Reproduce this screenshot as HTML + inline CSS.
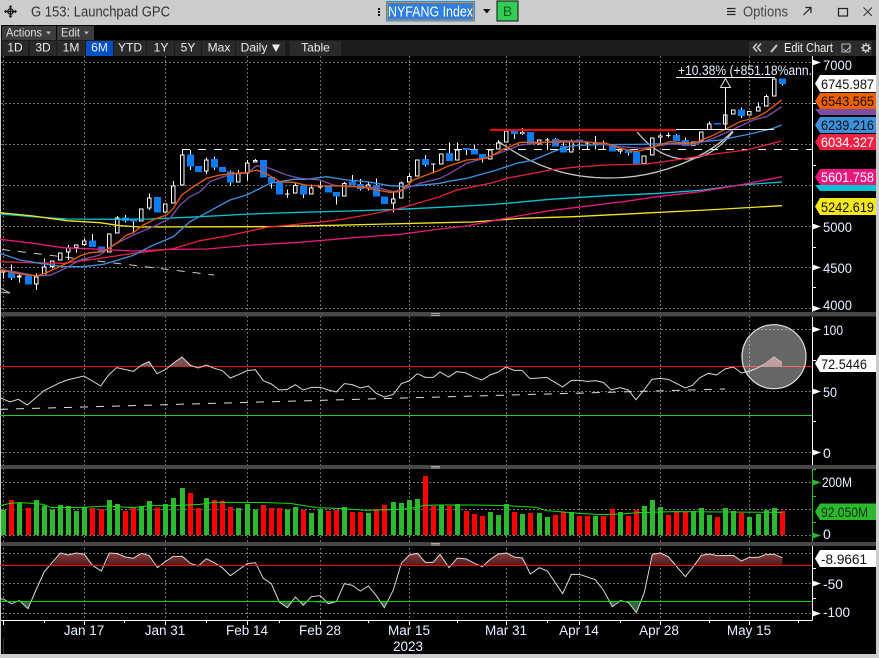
<!DOCTYPE html>
<html><head><meta charset="utf-8"><title>G 153: Launchpad GPC</title>
<style>
html,body{margin:0;padding:0;background:#ccc;width:879px;height:658px;overflow:hidden}
svg{display:block}
text{font-family:"Liberation Sans",sans-serif}
.w{stroke:#fff;stroke-width:3;fill:none;shape-rendering:crispEdges}
.o{stroke:#fff;stroke-width:14;fill:none;shape-rendering:crispEdges}
.i{stroke:#000;stroke-width:8;fill:none;shape-rendering:crispEdges}
.b{stroke:#0a7cf2;stroke-width:21;fill:none;shape-rendering:crispEdges}
.ma{fill:none;stroke-width:4;stroke-linejoin:round}
.ax{fill:#e6f0ff;font-size:14px}
.tag{font-size:14px}
.btn{fill:#ececec;font-size:12px;text-anchor:middle}
</style></head><body>
<svg width="879" height="658" viewBox="0 0 879 658" xmlns="http://www.w3.org/2000/svg">
<defs>
<clipPath id="cA"><rect x="0" y="0" width="2640" height="300"/></clipPath>
<clipPath id="cB"><rect x="0" y="409" width="2640" height="100"/></clipPath>
<clipPath id="cC"><rect x="0" y="0" width="2640" height="170"/></clipPath>
<linearGradient id="gr" x1="0" y1="0" x2="0" y2="1"><stop offset="0" stop-color="#8a3a3a"/><stop offset="1" stop-color="#401818"/></linearGradient>
</defs>
<rect width="879" height="658" fill="#cccccc"/>
<rect x="1" y="25" width="875" height="629" fill="#000"/>

<!-- title bar -->
<g stroke="#111" fill="none"><path d="M5.5 11.5H15.5M10.5 6.5V16.5" stroke-width="1.2"/><circle cx="10.5" cy="11.5" r="2.7" stroke-width="1.2"/></g>
<path d="M10.5 5l-2 2.2h4zM10.5 18l-2-2.2h4zM4 11.5l2.2-2v4zM17 11.5l-2.2-2v4z" fill="#111"/>
<text x="31" y="16.5" font-size="15" fill="#333" textLength="139" lengthAdjust="spacingAndGlyphs">G 153: Launchpad GPC</text>
<path d="M378 8h2v2h-2zM378 11h2v2h-2zM378 14h2v2h-2z" fill="#111"/>
<rect x="386" y="1" width="89" height="20.500" fill="#1e8fe8"/>
<rect x="387.500" y="2.500" width="86" height="17.500" fill="#2d7fe0" stroke="#e88a1c" stroke-width="1"/>
<text x="388" y="16.500" font-size="15" fill="#fff" textLength="85" lengthAdjust="spacingAndGlyphs">NYFANG Index</text>
<path d="M483 9h7.500l-3.700 4.500z" fill="#111"/>
<rect x="497" y="1" width="21" height="20" fill="#33cc55" stroke="#111" stroke-width="1"/>
<text x="507.500" y="16" font-size="14" fill="#0d5a1c" text-anchor="middle">B</text>
<path d="M727 8.500h8.500M727 11.500h8.500M727 14.500h8.500" stroke="#222" stroke-width="1.200"/>
<text x="743" y="16.500" font-size="15" fill="#444" textLength="45" lengthAdjust="spacingAndGlyphs">Options</text>
<path d="M803.500 15l7-7M805.500 7.500h5.500v5.500" stroke="#222" stroke-width="1.200" fill="none"/>
<rect x="838.500" y="8.500" width="9" height="7.500" fill="none" stroke="#222" stroke-width="1.200"/>
<path d="M863.500 7.500l8.500 8.500M872 7.500l-8.500 8.500" stroke="#333" stroke-width="1"/>

<!-- toolbar -->
<rect x="1" y="40" width="875" height="16" fill="#1c1c1c"/>
<rect x="2" y="26" width="54" height="14" fill="#3c3c3c"/><rect x="57" y="26" width="37" height="14" fill="#3c3c3c"/>
<text x="6" y="36.500" font-size="12" fill="#e0e0e0" textLength="36" lengthAdjust="spacingAndGlyphs">Actions</text>
<path d="M46 31.500h5l-2.500 3z" fill="#bbb"/>
<text x="61" y="36.500" font-size="12" fill="#e0e0e0" textLength="19" lengthAdjust="spacingAndGlyphs">Edit</text>
<path d="M84 31.500h5l-2.500 3z" fill="#bbb"/>
<g fill="#2a2a2a"><rect x="3" y="41" width="25" height="15"/><rect x="30" y="41" width="26" height="15"/><rect x="57" y="41" width="28" height="15"/><rect x="114" y="41" width="32" height="15"/><rect x="147" y="41" width="27" height="15"/><rect x="175" y="41" width="26" height="15"/><rect x="202" y="41" width="33" height="15"/><rect x="236" y="41" width="49" height="15"/><rect x="290" y="41" width="51" height="15"/></g>
<rect x="86" y="41" width="27" height="15" fill="#0050c4"/>
<text class="btn" x="15" y="51.500">1D</text><text class="btn" x="43" y="51.500">3D</text><text class="btn" x="71" y="51.500">1M</text><text class="btn" x="99.500" y="51.500">6M</text><text class="btn" x="130" y="51.500">YTD</text><text class="btn" x="161" y="51.500">1Y</text><text class="btn" x="188" y="51.500">5Y</text><text class="btn" x="219" y="51.500">Max</text><text class="btn" x="254" y="51.500">Daily</text>
<path d="M272 44.500h8l-4 7.500z" fill="#eee"/>
<text class="btn" x="315.500" y="51.500">Table</text>
<rect x="749" y="41" width="123" height="15" fill="#2c2c2c"/>
<path d="M757 43.500l-3.500 4 3.500 4M761 43.500l-3.500 4 3.500 4" stroke="#ccc" stroke-width="1.500" fill="none"/>
<path d="M771 52l6-7" stroke="#ccc" stroke-width="2"/>
<text x="784" y="52" font-size="13" fill="#f0f0f0" textLength="49" lengthAdjust="spacingAndGlyphs">Edit Chart</text>
<path d="M842 44h8v8h-8zM843 49l3 2 5-5" stroke="#bbb" fill="none"/>
<circle cx="866" cy="48" r="2.800" fill="none" stroke="#ccc" stroke-width="1.500"/><circle cx="866" cy="48" r="4" fill="none" stroke="#ccc" stroke-width="1.800" stroke-dasharray="1.500 1.500"/>

<!-- grid -->
<g stroke="#707070" stroke-width="1" stroke-dasharray="2 2" fill="none">
<path d="M3.500 56V620M84.500 56V620M165.500 56V620M247.500 56V620M320.500 56V620M409.500 56V620M506.500 56V620M579.500 56V620M660.500 56V620M749.500 56V620"/>
<path d="M1 62.500H812M1 103.500H812M1 144.500H812M1 185.500H812M1 226.500H812M1 267.500H812M1 308.500H812M1 329.500H812M1 391.500H812M1 452.500H812M1 482.500H812M1 509.500H812M1 535.500H812M1 553.500H812M1 583.500H812M1 613.500H812"/>
</g>

<!-- cup arcs and dashes -->
<path d="M498 141C535 168 570 178 610 178C655 178 705 160 733 131" fill="none" stroke="#c8c8c8" stroke-width="1.300"/>
<path d="M637 132C652 150 668 159 686 159C704 159 720 148 733 132" fill="none" stroke="#c8c8c8" stroke-width="1.300"/>
<path d="M182 149.500H812" stroke="#fff" stroke-width="1" stroke-dasharray="8 8"/>
<path d="M2 249.500L214 275" stroke="#ccc" stroke-width="1" stroke-dasharray="8 8"/>
<path d="M0 288l10 5M0 292l10 1" stroke="#bbb" stroke-width="1"/>

<!-- candles group 1 -->
<g transform="translate(0,150) scale(.33333)">
<path class="w" d="M10 365V386M34 343V390M58 370V398M109 370V420M133 325V378M157 331V355M205 285V330M229 284V308M253 265V288M277 252V291M352 198V250M376 195V218M400 208V250M448 130V180M520 93V161M547 0V13M571 0V60M619 22V72M643 20V60M691 62V107M715 60V98M742 30V92M766 27V37M814 81V116M862 118V144M886 100V130M910 107V144M934 103V134M961 95V115M1009 126V164M1033 96V139M1057 75V94M1081 87V122M1105 98V122M1129 85V140M1180 128V188M1204 95V146M1228 70V97M547 -1H560"/>
<path class="b" d="M34 367V384M85 377V404M277 271V291M304 289V307M376 202V213M400 208V215M472 141V188M571 13V50M595 48V66M643 27V52M667 51V66M691 64V98M790 30V83M814 81V98M838 97V134M910 107V134M985 110V128M1009 126V140M1057 94V105M1081 102V117M1129 105V140M1153 139V162M1276 28V44"/>
<path class="o" d="M10 365V368M58 376V383M109 380V404M133 349V378M157 331V351M181 307V332M205 293V308M229 284V294M253 272V285M328 250V307M352 202V250M424 176V214M448 142V176M496 160V187M520 106V161M547 13V107M619 28V65M715 70V98M742 37V70M766 30V37M862 130V133M886 105V130M934 112V134M961 110V113M1033 99V139M1105 103V112M1180 146V160M1204 98V146M1228 78V97M1252 29V79"/>
<path class="i" d="M58 379V380M109 383V401M133 352V375M157 334V348M181 310V329M205 296V305M229 287V291M253 275V282M328 253V304M352 205V247M424 179V211M448 145V173M496 163V184M520 109V158M547 16V104M619 31V62M715 73V95M742 40V67M766 33V34M886 108V127M934 115V131M1033 102V136M1105 106V109M1180 149V157M1204 101V143M1228 81V94M1252 32V76"/>
</g>
<!-- candles group 2 -->
<g transform="translate(420,110) scale(.33333)">
<path class="w" d="M16 135V170M40 161V190M88 97V153M112 97V118M139 114V135M163 105V118M187 132V158M235 90V97M283 63V87M307 54V75M382 84V120M406 84V87M430 93V108M454 88V92M478 88V118M502 96V118M526 78V118M550 92V118M601 115V132M625 118V137"/>
<path class="b" d="M16 147V165M88 129V153M139 114V120M163 118V134M187 132V146M283 63V72M331 66V103M406 87V110M430 108V128M478 88V96M550 97V103M577 103V125M625 118V129M649 126V162"/>
<path class="o" d="M40 161V164M64 130V163M112 118V152M211 118V149M235 97V119M259 62V98M307 66V72M358 88V103M382 88V91M454 92V128M502 98V100M526 100V102M601 118V124"/>
<path class="i" d="M64 133V160M112 121V149M211 121V146M235 100V116M259 65V95M307 68V70M358 91V100M454 95V125M601 120V122"/>
</g>
<!-- candles group 3 -->
<g transform="translate(620,60) scale(.33333)">
<path class="w" d="M121 222V255M145 218V232M169 222V225M196 232V240M268 185V190M364 143V174M415 127V139M439 103V108M487 72V76"/>
<path class="b" d="M169 225V243M196 240V258M292 189V193M364 148V168M487 55V72"/>
<path class="o" d="M72 286V312M97 232V286M121 226V232M145 225V228M220 245V258M244 214V244M268 190V210M316 163V193M340 148V163M388 153V166M415 139V155M439 108V140M463 55V109"/>
<path class="i" d="M72 289V309M97 235V283M121 228V230M220 248V255M244 217V241M268 193V207M316 166V190M340 151V160M388 156V163M415 142V152M439 111V137M463 58V106"/>
</g>

<!-- moving averages -->
<g transform="translate(0,150) scale(.33333)">
<polyline class="ma" stroke="#00c4d4" points="0,192 100,200 200,207 350,208 450,207 600,200 750,192 900,187 1050,183 1200,178 1320,172 1450,165 1520,160 1650,148 1820,137 1980,130 2110,120 2220,105 2346,96"/>
<polyline class="ma" stroke="#f2e41e" points="0,188 100,198 200,212 300,218 360,227 420,231 800,230 1000,226 1200,221 1320,218 1420,216 1560,205 1720,200 1920,190 2120,180 2346,167"/>
<polyline class="ma" stroke="#e8177e" points="0,268 100,280 190,293 300,298 400,303 520,298 620,297 760,285 900,277 1060,263 1200,253 1320,237 1400,228 1490,210 1570,195 1650,182 1770,167 1870,155 1970,140 2100,125 2220,105 2346,80"/>
<polyline class="ma" stroke="#e3203e" points="0,335 100,338 190,340 300,325 400,310 520,296 600,272 680,258 800,232 900,222 1000,212 1100,195 1200,175 1320,140 1370,120 1470,100 1520,85 1650,60 1720,52 1820,45 1940,42 2040,28 2120,15 2240,0 2345,-27"/>
<polyline class="ma" stroke="#3c90dc" points="0,310 60,330 120,340 190,350 250,350 310,343 400,316 450,290 520,260 570,215 620,188 690,150 740,135 810,100 880,88 920,88 980,80 1040,90 1100,95 1170,107 1220,110 1320,100 1340,95 1400,85 1490,60 1550,40 1600,30 1660,5 1710,-12 1790,-16 1920,-17 2060,-20 2160,-30 2250,-48 2320,-65 2345,-75"/>
<polyline class="ma" stroke="#7c4fa4" points="0,358 60,368 110,378 150,376 190,358 240,330 300,315 340,285 400,255 460,230 510,205 540,165 570,140 600,125 630,95 670,80 700,72 740,70 770,47 810,55 860,75 900,85 960,90 1000,105 1040,110 1090,110 1140,115 1180,125 1210,118 1260,100 1320,85 1350,70 1400,40 1450,25 1510,5 1560,-15 1610,-20 1680,-28 1740,-27 1790,-20 1860,-10 1930,-5 2010,-18 2080,-15 2140,-35 2200,-62 2260,-90 2300,-100 2345,-130"/>
<polyline class="ma" stroke="#e85c00" points="0,360 60,372 110,378 140,368 200,340 240,318 270,308 310,305 350,280 380,255 400,248 430,225 470,205 500,195 520,175 545,135 580,110 620,85 660,75 700,70 740,68 770,60 800,72 840,95 880,97 920,106 960,108 1000,108 1040,108 1090,112 1130,120 1170,127 1200,125 1240,90 1280,75 1320,60 1340,50 1400,30 1460,25 1510,-2 1560,-23 1610,-23 1710,-24 1760,-24 1820,-20 1860,-5 1910,5 1957,-8 2010,-25 2080,-20 2130,-40 2176,-62 2220,-85 2270,-98 2300,-115 2345,-150"/>
</g>

<!-- annotations -->
<path d="M490 130H676" stroke="#ff0000" stroke-width="2"/>
<path d="M676 129.500H774M676 77.500H775M725.500 129V88" stroke="#fff" stroke-width="1"/>
<path d="M725.500 78.500L720.500 87.500H730.500Z" fill="#000" stroke="#ddd" stroke-width="1"/>
<text x="678" y="75" font-size="13.500" fill="#e8f0ff" textLength="134" lengthAdjust="spacingAndGlyphs">+10.38% (+851.18%ann.</text>

<!-- RSI -->
<path d="M0 366.500H812" stroke="#ff0000" stroke-width="1"/>
<path d="M0 415.500H812" stroke="#22cc22" stroke-width="1"/>
<g transform="translate(0,310) scale(.33333)">
<polygon clip-path="url(#cC)" fill="#7d4f4f" points="415,170 447,155 458,170 510,170 546,141 580,170"/>
<path d="M0 298L1320 261L2175 237" stroke="#ddd" stroke-width="3" fill="none" stroke-dasharray="24 24"/>
<polyline fill="none" stroke="#d8d8d8" stroke-width="3" points="0,263 30,276 55,268 82,285 132,242 180,218 205,209 252,198 302,228 326,195 350,173 400,184 425,165 447,155 471,191 497,178 520,160 546,141 571,166 595,174 619,165 643,175 667,182 691,204 715,194 742,182 766,179 790,212 814,222 838,240 862,238 886,224 910,240 934,232 961,232 985,240 1009,246 1033,221 1057,224 1081,234 1105,228 1129,250 1153,261 1180,253 1204,221 1228,212 1252,191 1276,202 1300,202 1320,186 1346,201 1370,185 1395,188 1420,200 1446,210 1470,195 1495,186 1518,171 1542,181 1566,181 1590,206 1640,202 1688,231 1714,211 1738,211 1762,214 1786,212 1810,217 1834,240 1860,233 1885,240 1908,269 1932,240 1956,208 1980,205 2005,208 2056,234 2077,226 2100,203 2125,190 2150,195 2175,177 2200,171 2225,189 2250,183 2270,175 2295,162 2322,141 2346,158"/>
</g>
<circle cx="774" cy="356.700" r="32" fill="#ffffff" fill-opacity=".4" stroke="#e0e0e0" stroke-width="1.200"/>
<polygon points="760,367 765,364 774,357 782,362.700 782,367" fill="#c09c9e"/>

<!-- volume -->
<g transform="translate(0,465) scale(.33333)">
<g stroke-width="15" fill="none" shape-rendering="crispEdges">
<path stroke="#2eb82e" d="M10 135V210M58 113V210M109 105V210M133 122V210M157 134V210M181 120V210M205 123V210M229 138V210M253 126V210M328 105V210M352 117V210M424 123V210M448 108V210M496 117V210M520 99V210M547 69V210M619 99V210M715 129V210M742 117V210M766 134V210M862 134V210M886 126V210M934 144V210M961 132V210M1033 126V210M1105 144V210M1180 111V210M1204 114V210M1228 105V210M1252 102V210M1324 120V210M1372 117V210M1471 141V210M1495 150V210M1519 117V210M1567 147V210M1618 144V210M1642 156V210M1714 141V210M1786 153V210M1861 141V210M1933 123V210M1957 105V210M1981 126V210M2080 138V210M2104 129V210M2128 150V210M2176 129V210M2200 138V210M2248 156V210M2275 147V210M2299 135V210M2323 129V210"/>
<path stroke="#ff0000" d="M34 105V210M85 129V210M277 129V210M304 132V210M376 138V210M400 128V210M472 128V210M571 84V210M595 129V210M643 105V210M667 108V210M691 126V210M790 120V210M814 129V210M838 129V210M910 135V210M985 138V210M1009 135V210M1057 141V210M1081 141V210M1129 132V210M1153 120V210M1276 33V210M1300 123V210M1348 123V210M1399 138V210M1423 147V210M1447 153V210M1543 141V210M1591 144V210M1666 150V210M1690 143V210M1738 153V210M1762 153V210M1810 153V210M1837 132V210M1885 153V210M1909 135V210M2005 150V210M2029 138V210M2056 141V210M2152 156V210M2224 144V210M2347 138V210"/>
</g>
<polyline fill="none" stroke="#11dd11" stroke-width="3" points="0,122 30,115 60,113 100,115 130,118 155,128 250,127 320,123 400,128 450,122 520,122 600,118 640,112 700,112 800,113 870,115 950,128 1030,131 1100,136 1200,133 1250,128 1270,121 1320,120 1420,120 1520,122 1610,127 1640,137 1740,145 1800,149 1860,147 1920,143 2020,140 2347,142"/>
</g>

<!-- %R -->
<g transform="translate(0,465) scale(.33333)">
<polygon clip-path="url(#cA)" fill="url(#gr)" points="157,300 181,264 205,270 229,264 253,268 277,300 318,300 328,264 352,266 376,276 400,280 424,265 448,272 462,300 490,300 520,274 547,274 571,295 595,303 619,281 643,293 655,300 1204,300 1228,270 1252,265 1276,292 1300,292 1320,268 1347,308 1372,279 1399,282 1423,295 1447,305 1471,283 1495,267 1519,264 1543,276 1567,279 1585,300 1950,300 1957,268 1981,264 2005,275 2030,300 2080,300 2104,271 2128,267 2152,272 2200,271 2224,288 2248,277 2275,277 2299,268 2323,268 2347,278 2347,300"/>
<polygon clip-path="url(#cB)" fill="#2c6a3c" points="60,409 84,431 92,409 835,409 862,428 880,409 895,409 910,421 920,409 985,416 1009,409 1140,409 1153,428 1162,409 1825,409 1837,425 1850,409 1885,412 1909,443 1925,409"/>
<polyline fill="none" stroke="#d8d8d8" stroke-width="3" points="0,402 10,402 34,416 58,407 84,431 108,375 133,320 157,292 181,264 205,270 229,264 253,268 277,301 304,318 328,264 352,266 376,276 400,280 424,265 448,272 472,308 496,290 520,274 547,274 571,295 595,303 619,281 643,293 667,308 691,332 715,315 742,296 766,293 790,340 814,356 838,411 862,428 886,396 910,421 934,395 961,392 985,416 1009,410 1033,356 1057,361 1081,378 1105,363 1129,392 1153,428 1180,375 1204,295 1228,270 1252,265 1276,292 1300,292 1320,268 1347,308 1372,279 1399,282 1423,295 1447,305 1471,283 1495,267 1519,264 1543,276 1567,279 1591,327 1618,308 1642,318 1688,386 1714,328 1738,328 1786,344 1810,375 1837,425 1861,407 1885,412 1909,443 1933,383 1957,268 1981,264 2005,275 2056,335 2080,305 2104,271 2128,267 2152,272 2200,271 2224,288 2248,277 2275,277 2299,268 2323,268 2347,278"/>
</g>
<path d="M0 565.500H812" stroke="#ff0000" stroke-width="1"/>
<path d="M0 601.500H812" stroke="#00dd00" stroke-width="1"/>

<!-- separators -->
<g fill="#474747"><rect x="1" y="312" width="875" height="4.500"/><rect x="1" y="465" width="875" height="4"/><rect x="1" y="542" width="875" height="4"/></g>
<path d="M431 313.500h9M431 315.500h9M431 466.500h9M431 468h9M431 543.500h9M431 545h9" stroke="#aaa" stroke-width="1"/>

<!-- axes -->
<path d="M812.500 56V312M812.500 317V465M812.500 546V620.500M1 620.500H812.500" stroke="#fff" stroke-width="1"/>
<path d="M812.500 469V542" stroke="#2eb82e" stroke-width="1"/>
<path d="M812 165.500h4M812 247.500h4M812 287.500h4M812 103.500h4M812 360.500h4M812 421.500h4M812 568.500h4M812 598.500h4" stroke="#fff"/>
<path d="M812 469.500h4M812 496.500h4M812 522.500h4" stroke="#2eb82e"/>
<path d="M3.500 620V625M44.500 620V623M84.500 620V625M124.500 620V623M165.500 620V625M206.500 620V623M247.500 620V625M279.500 620V623M320.500 620V625M368.500 620V623M409.500 620V625M457.500 620V623M506.500 620V625M547.500 620V623M579.500 620V625M620.500 620V623M660.500 620V625M709.500 620V623M749.500 620V625M798.500 620V623" stroke="#fff"/>
<path d="M3.500 638V654" stroke="#333"/>
<g fill="#fff"><path d="M812.500 59.500L821 62.500L812.500 65.500ZM812.500 223.500L821 226.500L812.500 229.500ZM812.500 264.500L821 267.500L812.500 270.500ZM812.500 305.500L821 308.500L812.500 311.500ZM812.500 326.500L821 329.500L812.500 332.500ZM812.500 388.500L821 391.500L812.500 394.500ZM812.500 449.500L821 452.500L812.500 455.500ZM812.500 580.500L821 583.500L812.500 586.500ZM812.500 610.500L821 613.500L812.500 616.500Z"/></g>
<path d="M812.500 479.500L821 482.500L812.500 485.500ZM812.500 532.500L821 535.500L812.500 538.500Z" fill="#2eb82e"/>
<g class="ax">
<text x="823" y="70" textLength="29" lengthAdjust="spacingAndGlyphs">7000</text>
<text x="823" y="232" textLength="29" lengthAdjust="spacingAndGlyphs">5000</text>
<text x="823" y="273" textLength="29" lengthAdjust="spacingAndGlyphs">4500</text>
<text x="823" y="310" textLength="29" lengthAdjust="spacingAndGlyphs">4000</text>
<text x="823" y="335" textLength="20" lengthAdjust="spacingAndGlyphs">100</text>
<text x="823" y="397" textLength="14" lengthAdjust="spacingAndGlyphs">50</text>
<text x="823" y="458">0</text>
<text x="822" y="487" textLength="30" lengthAdjust="spacingAndGlyphs">200M</text>
<text x="823" y="539">0</text>
<text x="823" y="589" textLength="20" lengthAdjust="spacingAndGlyphs">-50</text>
<text x="823" y="617" textLength="27" lengthAdjust="spacingAndGlyphs">-100</text>
</g>

<!-- tags -->
<path d="M820 109H876V115H820L815 109Z" fill="#7c4fa4"/>
<path d="M820 185H876V191H820L815 185Z" fill="#00c4d4"/>
<g>
<path d="M820 75H876V92H820L815 83.500Z" fill="#fff"/>
<path d="M820 93H876V109H820L815 101Z" fill="#f06000"/>
<path d="M820 117H876V133H820L815 125Z" fill="#3c90dc"/>
<path d="M820 134H876V150H820L815 142Z" fill="#f02244"/>
<path d="M820 169H876V185H820L815 177Z" fill="#e8177e"/>
<path d="M820 198H876V215H820L815 206.500Z" fill="#f5e71e"/>
<path d="M820 355H876V372H820L815 363.500Z" fill="#fff"/>
<path d="M820 503.500H876V520H820L815 511.700Z" fill="#2eb82e"/>
<path d="M820 550H876V567H820L815 558.500Z" fill="#fff"/>
</g>
<g class="tag">
<text x="821" y="89" fill="#111" textLength="53" lengthAdjust="spacingAndGlyphs">6745.987</text>
<text x="821" y="106" fill="#111" textLength="53" lengthAdjust="spacingAndGlyphs">6543.565</text>
<text x="821" y="130" fill="#111" textLength="53" lengthAdjust="spacingAndGlyphs">6239.216</text>
<text x="821" y="147" fill="#fff" textLength="53" lengthAdjust="spacingAndGlyphs">6034.327</text>
<text x="821" y="182" fill="#fff" textLength="53" lengthAdjust="spacingAndGlyphs">5601.758</text>
<text x="821" y="212" fill="#111" textLength="53" lengthAdjust="spacingAndGlyphs">5242.619</text>
<text x="821" y="369" fill="#111" textLength="46" lengthAdjust="spacingAndGlyphs">72.5446</text>
<text x="821" y="517" fill="#113311" textLength="47" lengthAdjust="spacingAndGlyphs">92.050M</text>
<text x="821" y="564" fill="#111" textLength="46" lengthAdjust="spacingAndGlyphs">-8.9661</text>
</g>

<!-- date labels -->
<g fill="#e6f0ff" font-size="13.500" text-anchor="middle">
<text x="84" y="635">Jan 17</text>
<text x="165" y="635">Jan 31</text>
<text x="247" y="635">Feb 14</text>
<text x="320" y="635">Feb 28</text>
<text x="409" y="635">Mar 15</text>
<text x="506" y="635">Mar 31</text>
<text x="579" y="635">Apr 14</text>
<text x="659" y="635">Apr 28</text>
<text x="749" y="635">May 15</text>
<text x="408" y="651">2023</text>
</g>
<rect x="876" y="25" width="3" height="633" fill="#ccc"/>
</svg>
</body></html>
